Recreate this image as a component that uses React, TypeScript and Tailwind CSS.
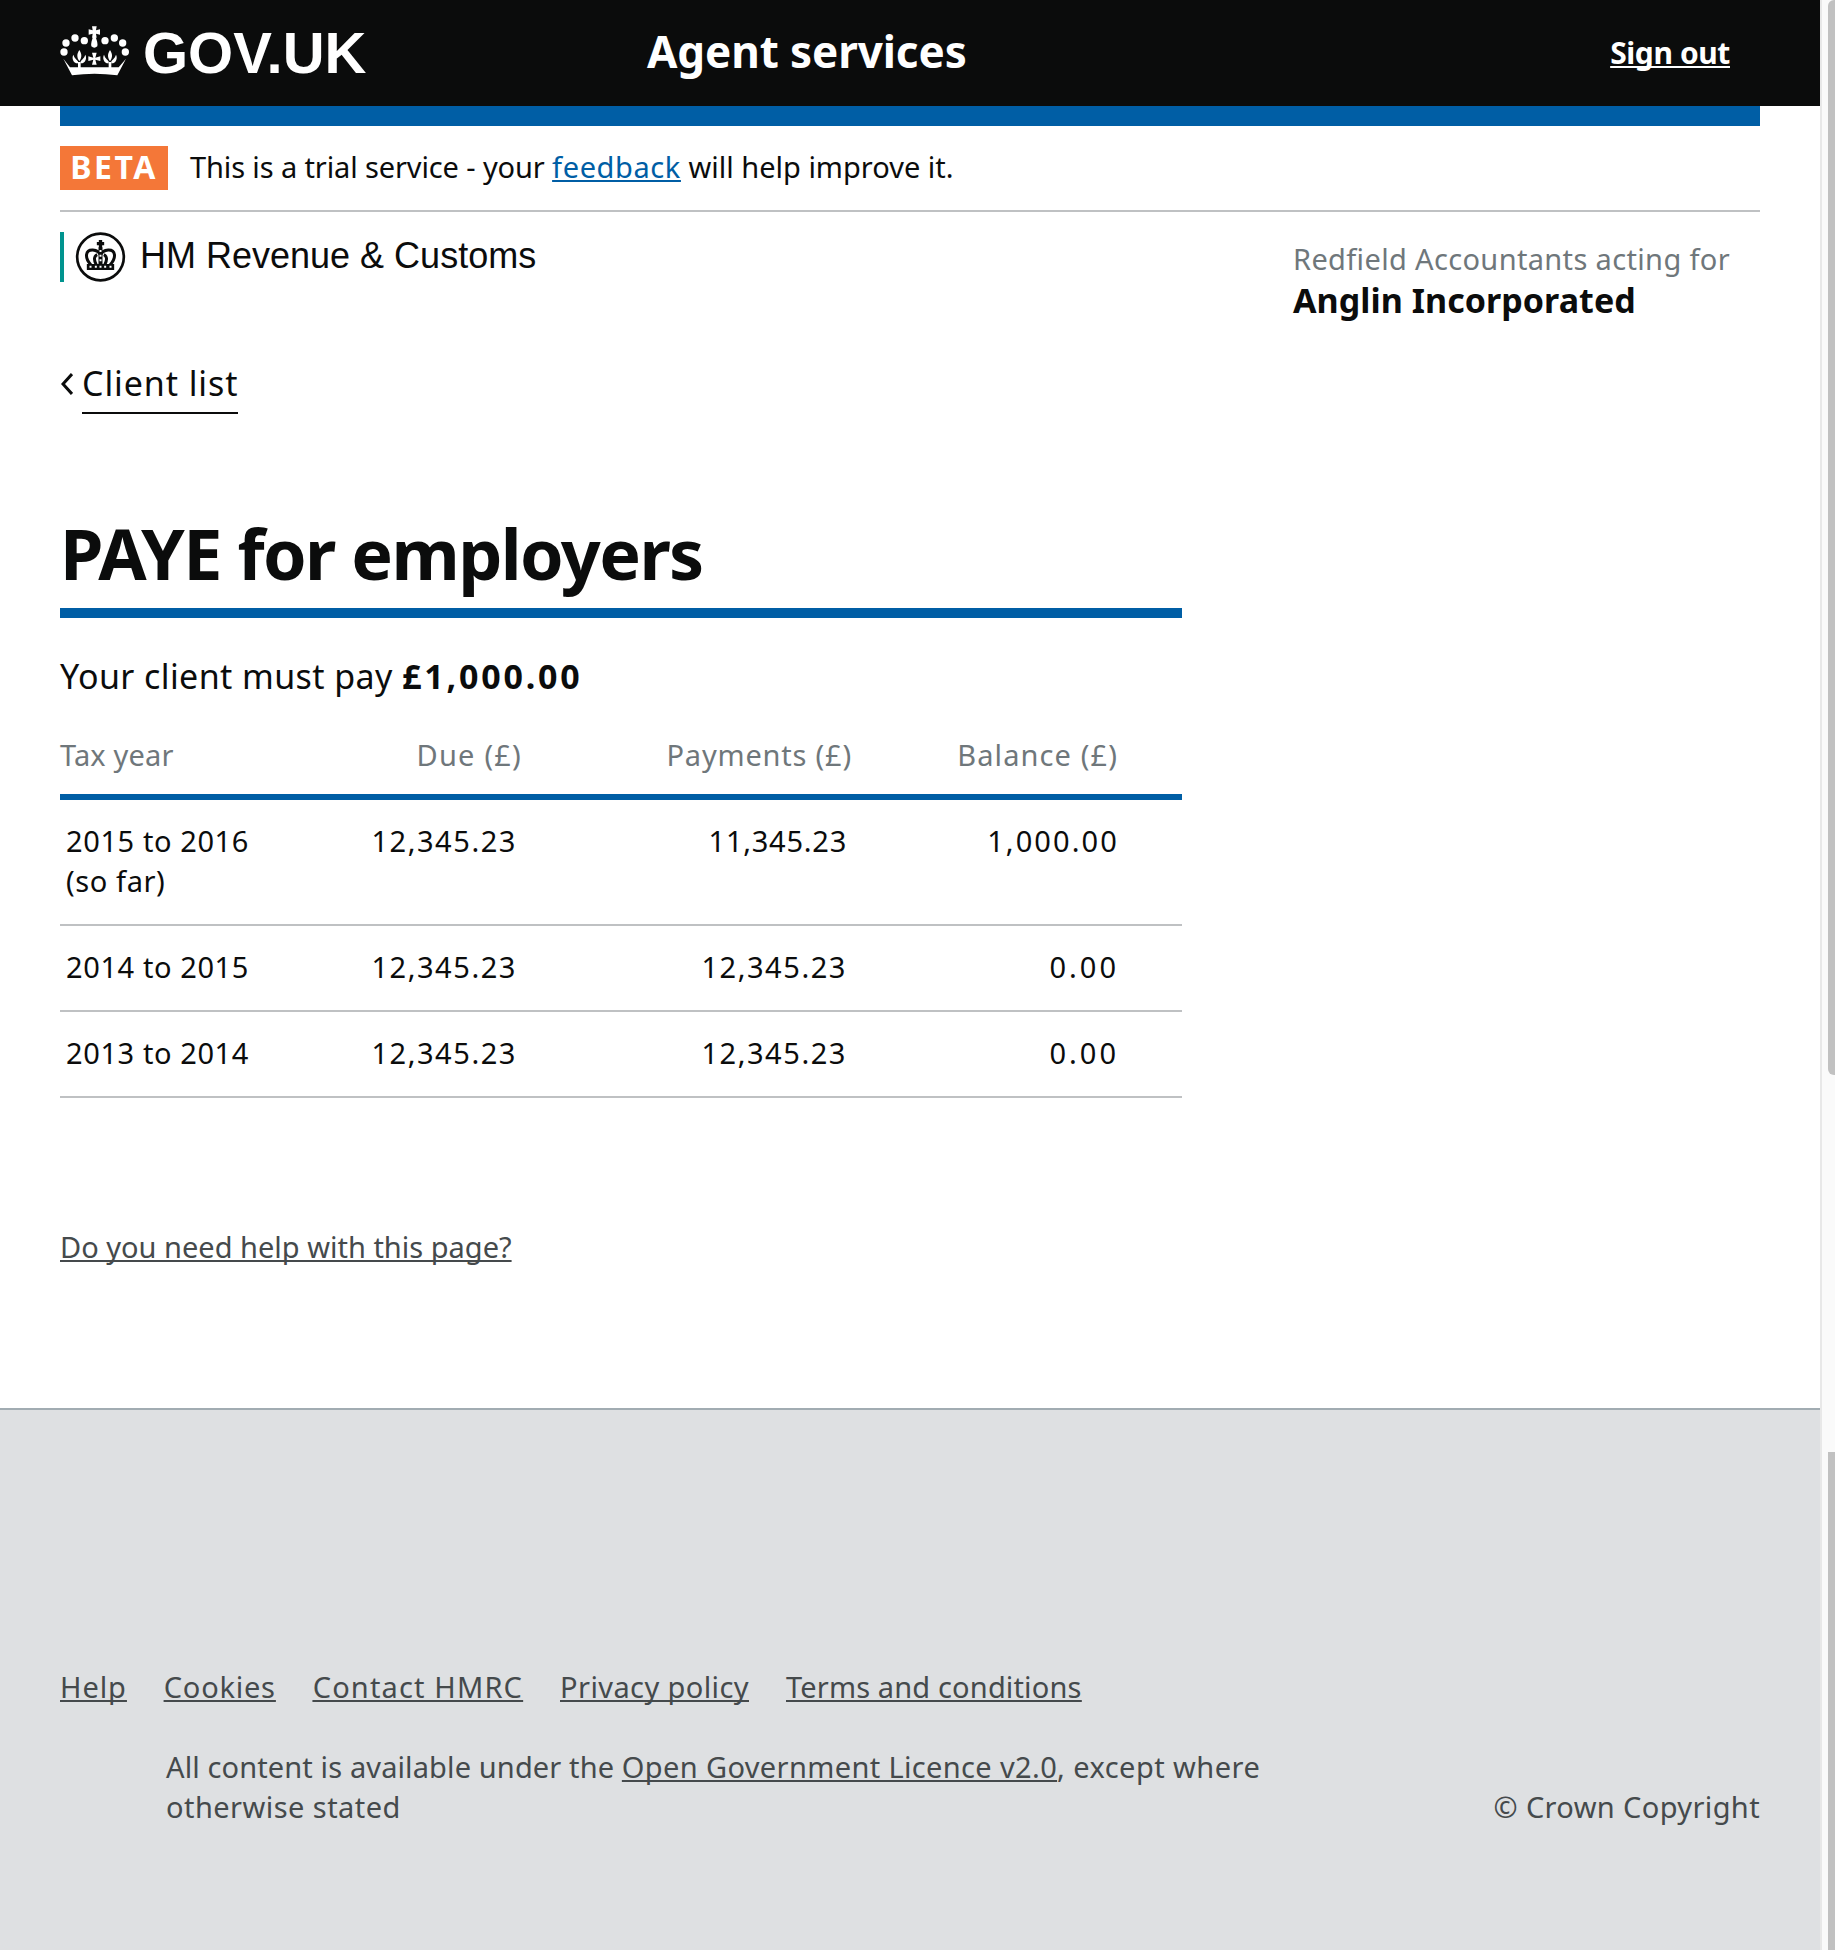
const sans = "font-['Noto_Sans',sans-serif]";
const link = "underline underline-offset-[2px] decoration-2 [text-decoration-skip-ink:none]";

function Fleur({ x }: { x: number }) {
  return (
    <g>
      <path d={`M${x} 106C${x + 8} 118 ${x + 8} 128 ${x} 140C${x - 8} 128 ${x - 8} 118 ${x} 106Z`} />
      <path d={`M${x - 4} 146C${x - 20} 146 ${x - 23} 128 ${x - 18} 120C${x - 14} 132 ${x - 8} 134 ${x - 4} 140Z`} />
      <path d={`M${x + 4} 146C${x + 20} 146 ${x + 23} 128 ${x + 18} 120C${x + 14} 132 ${x + 8} 134 ${x + 4} 140Z`} />
      <rect x={x - 4} y={142} width={8} height={18} />
    </g>
  );
}

function CrownWhite() {
  return (
    <svg viewBox="30 25 210 165" className="w-[70px] h-[55px] shrink-0 -mt-[5px]" fill="#fff">
      <path d="M126 35h14l-2 12 12-3v16l-12-3 2 12h-14l2-12-12 3V44l12 3z" />
      <path d="M133 58C125 75 122 88 124 95Q133 103 142 95C144 88 141 75 133 58Z" />
      <circle cx="75" cy="70" r="11" /><circle cx="103" cy="78" r="11" /><circle cx="165" cy="78" r="11" /><circle cx="193" cy="70" r="11" />
      <circle cx="48" cy="85" r="11" /><circle cx="218" cy="85" r="11" /><circle cx="42" cy="112" r="11" /><circle cx="226" cy="112" r="11" />
      <Fleur x={88} /><Fleur x={180} />
      <path d="M126 114h14l-4 15 15-4v14l-15-4 4 15h-14l4-15-15 4v-14l15 4z" />
      <path d="M40 132 66 182Q133 172 202 182L228 132 206 158H60Z" />
    </svg>
  );
}

function CrownCircle() {
  return (
    <svg viewBox="75 20 152 150" className="w-[51px] h-[50px] shrink-0" fill="#0b0c0c">
      <circle cx="151" cy="95" r="70" fill="none" stroke="#0b0c0c" strokeWidth="8" />
      <path d="M146 44h10v6h6v10h-6v8h-10v-8h-6V50h6z" />
      <g fill="none" stroke="#0b0c0c" strokeWidth="9">
        <path d="M122 118C102 96 106 73 128 74 140 75 148 82 151 90" />
        <path d="M180 118C200 96 196 73 174 74 162 75 154 82 151 90" />
        <path d="M138 118C130 102 132 92 141 88" />
        <path d="M164 118C172 102 170 92 161 88" />
      </g>
      <rect x="145" y="66" width="12" height="54" />
      <path d="M148 74h6v6h-6zM148 88h6v6h-6zM148 102h6v6h-6z" fill="#fff" />
      <path d="M110 116h82v18h-82z" />
      <path d="M118 121h6v6h-6zM134 121h6v6h-6zM148 121h6v6h-6zM162 121h6v6h-6zM178 121h6v6h-6z" fill="#fff" />
    </svg>
  );
}

const tnum = "tracking-[1.55px]";

function Row({ year, sub, due, pay, payT, bal, balT }: { year: string; sub?: string; due: string; pay: string; payT: string; bal: string; balT: string }) {
  return (
    <tr className="border-b-2 border-[#bfc1c3] text-[#0b0c0c]">
      <td className="pl-[6px] pt-[21px] pb-[23px] align-top tracking-[0.6px]">{year}{sub && <><br />{sub}</>}</td>
      <td className={`pr-[5px] pt-[21px] pb-[23px] align-top text-right ${tnum}`}>{due}</td>
      <td className={`pr-[5px] pt-[21px] pb-[23px] align-top text-right ${payT}`}>{pay}</td>
      <td className={`pr-[63px] pt-[21px] pb-[23px] align-top text-right ${balT}`}>{bal}</td>
    </tr>
  );
}

export default function App() {
  return (
    <div className={`relative w-[1835px] h-[1950px] overflow-hidden bg-white text-[#0b0c0c] ${sans}`}>
      <div className="w-[1820px] h-[1950px] flex flex-col">
        <header className="h-[106px] bg-[#0b0c0c] text-white flex items-center pl-[60px] pr-[90px] shrink-0">
          <div className="w-[587px] flex items-center gap-[13px]">
            <CrownWhite />
            <span className="font-['Liberation_Sans',sans-serif] font-bold text-[58px] leading-none">GOV.UK</span>
          </div>
          <span className="font-bold text-[44px] leading-none tracking-[-0.1px] -mt-[4px]">Agent services</span>
          <a className={`ml-auto font-bold text-[30px] leading-none tracking-[-0.4px] ${link}`}>Sign out</a>
        </header>

        <div className="mx-[60px] flex flex-col flex-1">
          <div className="h-[20px] bg-[#005ea5] shrink-0" />
          <div className="mt-[20px] pb-[20px] border-b-2 border-[#bfc1c3] flex items-center shrink-0">
            <span className="w-[108px] h-[44px] bg-[#f47738] text-white font-bold text-[32px] leading-[42px] tracking-[2.5px] text-center">BETA</span>
            <p className="ml-[22px] -mt-[3px] text-[29px] leading-[44px]">
              <span className="tracking-[-0.12px]">This is a trial service - your </span><a className={`text-[#005ea5] tracking-[0.6px] ${link}`}>feedback</a> will help improve it.
            </p>
          </div>

          <div className="pt-[20px] flex justify-between shrink-0 h-[130px]">
            <div className="h-[50px] border-l-4 border-[#00948f] pl-[11px] flex items-center gap-[14px]">
              <CrownCircle />
              <span className="font-['Liberation_Sans',sans-serif] text-[36px] leading-none -mt-[2px]">HM Revenue &amp; Customs</span>
            </div>
            <div className="w-[467px] pt-[7px]">
              <p className="text-[#6f777b] text-[29px] leading-[40px] tracking-[0.35px]">Redfield Accountants acting for</p>
              <p className="font-bold text-[34px] leading-[42px] tracking-[0.05px]">Anglin Incorporated</p>
            </div>
          </div>

          <div className="mt-[20px] flex items-start shrink-0">
            <svg viewBox="0 0 12 24" className="w-[12px] h-[24px] mt-[10px] mr-[10px] ml-[1px]" fill="none" stroke="#0b0c0c" strokeWidth="3"><path d="M11 2 2 12l9 10" /></svg>
            <a className="-ml-[1px] text-[34px] leading-[42px] tracking-[0.9px] pb-[8px] border-b-2 border-[#0b0c0c]">Client list</a>
          </div>

          <div className="w-[1122px] mt-[99px]">
            <h1 className="font-bold text-[70px] leading-[80px] tracking-[-1.6px] border-b-[10px] border-[#005ea5] pb-[15px]">PAYE for employers</h1>
            <p className="mt-[36px] text-[34px] leading-[44px] tracking-[0.4px]">Your client must pay <strong className="font-bold tracking-[2.8px]">£1,000.00</strong></p>
            <table className="w-full table-fixed mt-[37px] text-[29px] leading-[40px]">
              <colgroup><col className="w-[270px]" /><col className="w-[192px]" /><col className="w-[330px]" /><col /></colgroup>
              <thead>
                <tr className="border-b-[6px] border-[#005ea5] text-[#6f777b] font-normal">
                  <th className="text-left font-normal pb-[19px] tracking-[0.15px]">Tax year</th>
                  <th className="text-right font-normal pb-[19px] tracking-[1.2px]">Due (£)</th>
                  <th className="text-right font-normal pb-[19px] tracking-[0.8px]">Payments (£)</th>
                  <th className="text-right font-normal pb-[19px] pr-[64px] tracking-[1.1px]">Balance (£)</th>
                </tr>
              </thead>
              <tbody>
                <Row year="2015 to 2016" sub="(so far)" due="12,345.23" pay="11,345.23" payT="tracking-[0.75px]" bal="1,000.00" balT="tracking-[2.1px]" />
                <Row year="2014 to 2015" due="12,345.23" pay="12,345.23" payT="tracking-[1.55px]" bal="0.00" balT="tracking-[3px]" />
                <Row year="2013 to 2014" due="12,345.23" pay="12,345.23" payT="tracking-[1.55px]" bal="0.00" balT="tracking-[3px]" />
              </tbody>
            </table>
            <a className={`block mt-[129px] text-[#454a4c] text-[29px] leading-[40px] ${link}`}>Do you need help with this page?</a>
          </div>
        </div>

        <footer className="h-[542px] shrink-0 bg-[#dee0e2] border-t-2 border-[#a1acb2] px-[60px] pt-[257px] text-[#454a4c] text-[29px] leading-[40px] tracking-[0.25px]">
          <nav className={`flex gap-[37px] ${link}`}>
            <a className="tracking-[0.9px]">Help</a>
            <a className="tracking-[0.75px]">Cookies</a>
            <a className="tracking-[1.15px]">Contact HMRC</a>
            <a className="tracking-[0.4px]">Privacy policy</a>
            <a className="tracking-[0.15px]">Terms and conditions</a>
          </nav>
          <div className="flex items-end justify-between mt-[40px]">
            <p className="ml-[106px] w-[1100px]"><span className="tracking-[0.12px]">All content is available under the </span><a className={`tracking-[0.36px] ${link}`}>Open Government Licence v2.0</a><span className="tracking-[0.45px]">, except where otherwise stated</span></p>
            <p className="tracking-[0.37px]">© Crown Copyright</p>
          </div>
        </footer>
      </div>

      <div className="absolute top-0 right-0 w-[15px] h-[1950px] bg-[#fafafa] border-l-2 border-[#e8e8e8]">
        <div className="absolute top-0 right-0 w-[7px] h-[1075px] bg-[#c1c1c1] rounded-bl-[6px] rounded-tl-[6px]" />
        <div className="absolute top-[1452px] right-0 w-[7px] h-[498px] bg-[#c1c1c1]" />
      </div>
    </div>
  );
}
